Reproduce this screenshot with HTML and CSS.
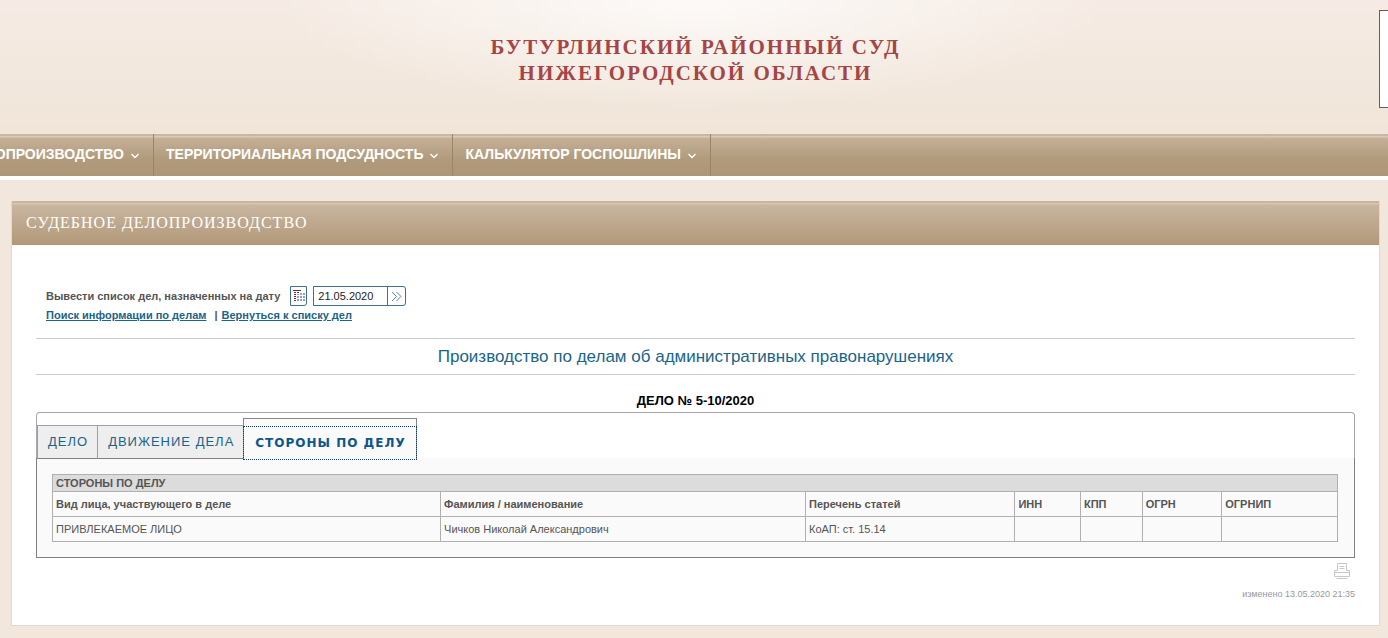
FILE: index.html
```
<!DOCTYPE html>
<html lang="ru">
<head>
  <meta charset="UTF-8">
  <meta name="viewport" content="width=device-width, initial-scale=1">
  <title>Бутурлинский районный суд Нижегородской области</title>
  <link rel="stylesheet" href="styles.css">
</head>
<body>

  <header class="header">
    <h1 class="court-name">БУТУРЛИНСКИЙ РАЙОННЫЙ СУД<br>НИЖЕГОРОДСКОЙ ОБЛАСТИ</h1>
    <div class="side-box"></div>
  </header>

  <nav class="menu">
    <a href="#" class="menu-item menu-item-first">СУДЕБНОЕ ДЕЛОПРОИЗВОДСТВО
      <svg class="arrow" width="8" height="6" viewBox="0 0 8 6"><path d="M.5 1l3.500 3.500L7.500 1"/></svg>
    </a>
    <a href="#" class="menu-item">ТЕРРИТОРИАЛЬНАЯ ПОДСУДНОСТЬ
      <svg class="arrow" width="8" height="6" viewBox="0 0 8 6"><path d="M.5 1l3.500 3.500L7.500 1"/></svg>
    </a>
    <a href="#" class="menu-item">КАЛЬКУЛЯТОР ГОСПОШЛИНЫ
      <svg class="arrow" width="8" height="6" viewBox="0 0 8 6"><path d="M.5 1l3.500 3.500L7.500 1"/></svg>
    </a>
  </nav>

  <main class="card">
    <h2 class="card-title">СУДЕБНОЕ ДЕЛОПРОИЗВОДСТВО</h2>

    <div class="content">
      <form class="date-form">
        <label for="date">Вывести список дел, назначенных на дату</label>
        <button type="button" class="calendar" aria-label="Календарь">
          <svg width="12" height="12" viewBox="0 0 12 12" shape-rendering="crispEdges">
            <path class="cal-head" d="M0 0h8v1H0zM1 2h2v1H1zM1 4h2v1H1zM1 6h2v1H1zM1 8h2v1H1zM1 10h2v1H1zM4 2h2v1H4z"/>
            <path class="cal-days" d="M4 4h2v1H4zM7 3h2v2H7zM10 3h2v2h-2zM4 6h2v2H4zM7 6h2v2H7zM10 6h2v2h-2zM4 9h2v2H4zM7 9h2v2H7zM10 9h2v2h-2z"/>
          </svg>
        </button>
        <div class="date-field">
          <input type="text" id="date" value="21.05.2020">
          <button type="submit" class="go" aria-label="Показать">
            <svg width="11" height="11" viewBox="0 0 11 11"><path d="M1 1l4.500 4.500L1 10M5.500 1l4.500 4.500L5.500 10"/></svg>
          </button>
        </div>
      </form>

      <div class="links">
        <a href="#">Поиск информации по делам</a>
        <span class="divider">|</span>
        <a href="#">Вернуться к списку дел</a>
      </div>

      <h3 class="section-title">Производство по делам об административных правонарушениях</h3>

      <div class="case-number">ДЕЛО № 5-10/2020</div>

      <div class="tabs" role="tablist">
        <button type="button" role="tab" class="tab">ДЕЛО</button>
        <button type="button" role="tab" class="tab">ДВИЖЕНИЕ ДЕЛА</button>
        <div class="tab-active">
          <button type="button" role="tab" class="tab" aria-selected="true">СТОРОНЫ ПО ДЕЛУ</button>
        </div>
      </div>

      <div class="panel">
        <table class="parties">
          <colgroup>
            <col class="col-kind"><col class="col-name"><col class="col-articles">
            <col class="col-inn"><col class="col-kpp"><col class="col-ogrn"><col>
          </colgroup>
          <thead>
            <tr class="caption-row">
              <th colspan="7">СТОРОНЫ ПО ДЕЛУ</th>
            </tr>
            <tr>
              <th>Вид лица, участвующего в деле</th>
              <th>Фамилия / наименование</th>
              <th>Перечень статей</th>
              <th>ИНН</th>
              <th>КПП</th>
              <th>ОГРН</th>
              <th>ОГРНИП</th>
            </tr>
          </thead>
          <tbody>
            <tr>
              <td>ПРИВЛЕКАЕМОЕ ЛИЦО</td>
              <td>Чичков Николай Александрович</td>
              <td>КоАП: ст. 15.14</td>
              <td></td>
              <td></td>
              <td></td>
              <td></td>
            </tr>
          </tbody>
        </table>
      </div>

      <div class="page-info">
        <a href="#" class="print" aria-label="Печать">
          <svg width="16" height="16" viewBox="0 0 16 16">
            <path d="M3.500 7.500v-7h9v7M5.500 3.500h5M5.500 5.500h5M3.500 7.500h-3v6h15v-6h-3M1 9.500h14M2.500 15.500h11"/>
          </svg>
        </a>
        <span class="changed">изменено 13.05.2020 21:35</span>
      </div>
    </div>
  </main>

</body>
</html>
```
FILE: styles.css
```
:root {
  --page: #f2e7dc;
  --text: #555555;
  --link: #1a6488;
  --line: #cccccc;
  --cell-line: #b0b0b0;
}

* {
  box-sizing: border-box;
}

body {
  margin: 0;
  padding-bottom: 12px;
  background: var(--page);
  color: var(--text);
  font-family: "Liberation Sans", Arial, sans-serif;
  font-size: 11px;
  line-height: 16px;
}

button,
input {
  margin: 0;
  padding: 0;
  border: 0;
  font: inherit;
}

svg {
  fill: none;
}

/* Header */
.header {
  position: relative;
  height: 134px;
  padding: 34px 0 0 3px;
  overflow: hidden;
  background:
    radial-gradient(ellipse 420px 110px at 50% 0, rgba(255, 255, 255, 0.75), transparent),
    linear-gradient(#f5ebe4, #f0e5d8);
}

.court-name {
  margin: 0;
  color: #a54545;
  font-family: "Liberation Serif", "Times New Roman", serif;
  font-size: 21px;
  line-height: 26px;
  letter-spacing: 2px;
  text-align: center;
}

.side-box {
  position: absolute;
  top: 10px;
  right: -1px;
  width: 10px;
  height: 98px;
  border: 1px solid #6b5c55;
  background: #ffffff;
}

/* Main menu */
.menu {
  display: flex;
  height: 46px;
  border-bottom: 4px solid #ffffff;
  background: linear-gradient(#c9b8a1 0 2px, #dccbb4 2px 3px, #c5b098 4px, #b09a7b 26px, #ae9677);
}

.menu-item {
  display: flex;
  align-items: center;
  gap: 7px;
  padding: 0 14px 2px 12px;
  border-right: 1px solid #9c8465;
  color: #ffffff;
  font-size: 14px;
  font-weight: bold;
  white-space: nowrap;
  text-decoration: none;
}

/* The first item runs out of the window on the left */
.menu-item-first {
  width: 154px;
  justify-content: flex-end;
  overflow: hidden;
}

.arrow {
  flex-shrink: 0;
  margin-top: 4px;
  stroke: #ffffff;
  stroke-width: 1.4;
}

/* Card */
.card {
  margin: 21px 8px 0 11px;
  border: 1px solid #ded9d0;
  border-top: 0;
  background: #ffffff;
}

.card-title {
  margin: 0;
  padding: 0 14px;
  background: linear-gradient(#c7b6a0 0 2px, #d5c5b0 2px 3px, #c9b6a0 4px, #b19878);
  color: #ffffff;
  font-family: "Liberation Serif", "Times New Roman", serif;
  font-size: 16px;
  font-weight: normal;
  line-height: 44px;
  letter-spacing: 1px;
}

.content {
  padding: 41px 24px 23px;
}

.date-form {
  display: flex;
  align-items: center;
  gap: 6px;
  padding-left: 10px;
}

.date-form label {
  margin-right: 4px;
  font-weight: bold;
}

.calendar,
.date-field {
  height: 20px;
  border: 1px solid #3f6e90;
  background: #ffffff;
}

.calendar {
  display: grid;
  place-items: center;
  width: 17px;
  border-radius: 0 0 3px 0;
}

.cal-head {
  fill: #7a2430;
}

.cal-days {
  fill: #8fa3bd;
}

.date-field {
  display: flex;
  border-radius: 0 3px 3px 0;
}

.date-field input {
  width: 73px;
  padding-left: 4px;
  background: transparent;
  color: #222222;
}

.go {
  display: grid;
  place-items: center;
  width: 18px;
  border-left: 1px solid #3f6e90;
  background: transparent;
}

.go svg {
  stroke: #4f8ab3;
}

.links {
  display: flex;
  gap: 4px;
  padding: 1px 0 0 10px;
  font-weight: bold;
}

.links a {
  color: var(--link);
}

.divider {
  padding-left: 4px;
}

.section-title {
  margin: 15px 0 0;
  border: solid var(--line);
  border-width: 1px 0;
  color: var(--link);
  font-size: 17px;
  font-weight: normal;
  line-height: 35px;
  text-align: center;
}

.case-number {
  padding: 18px 0 3px;
  color: #000000;
  font-size: 13px;
  font-weight: bold;
  text-align: center;
}

/* Tabs */
.tabs {
  display: flex;
  align-items: flex-end;
  height: 46px;
  border: 1px solid #a5a5ab;
  border-bottom: 0;
  border-radius: 4px 4px 0 0;
}

.tab {
  z-index: 1;
  height: 34px;
  margin-bottom: -1px;
  padding: 0 9px 0 10px;
  border: 1px solid #9a9fb5;
  border-left: 0;
  border-bottom-color: #808080;
  background: #eeeeee;
  color: var(--link);
  font-size: 13px;
  letter-spacing: 1px;
}

.tab:first-child {
  border-left: 1px solid #9a9fb5;
}

.tab-active {
  z-index: 2;
  margin: 0 0 -1px -1px;
  padding-top: 8px;
  border: 1px solid #85858d;
  border-bottom: 0;
  background: #fafafa;
}

.tab-active .tab {
  display: block;
  height: 32px;
  margin: 0;
  padding: 0 10px 0 11px;
  border: 0;
  outline: 1px dotted #0b3d66;
  background: #fafafa;
  color: #0e558c;
  font-family: "DejaVu Sans", Verdana, sans-serif;
  font-size: 12px;
  font-weight: bold;
}

/* Parties table */
.panel {
  padding: 16px 16px 15px 15px;
  border: 1px solid #808080;
  border-top: 0;
  background: #fafafa;
}

.parties {
  width: 100%;
  border-collapse: collapse;
  table-layout: fixed;
}

.parties th,
.parties td {
  height: 25px;
  padding: 0 3px;
  border: 1px solid var(--cell-line);
  text-align: left;
}

.parties .caption-row th {
  height: 17px;
  background: #dcdcdc;
}

.col-kind { width: 30.2%; }
.col-name { width: 28.4%; }
.col-articles { width: 16.3%; }
.col-inn { width: 5.1%; }
.col-kpp { width: 4.8%; }
.col-ogrn { width: 6.2%; }

/* Bottom of the card */
.page-info {
  display: flex;
  flex-direction: column;
  align-items: flex-end;
  gap: 7px;
  padding-top: 5px;
}

.print {
  height: 16px;
  margin-right: 5px;
}

.print svg {
  display: block;
  stroke: #c8c8c8;
}

.changed {
  color: #999999;
  font-size: 9px;
}
```
